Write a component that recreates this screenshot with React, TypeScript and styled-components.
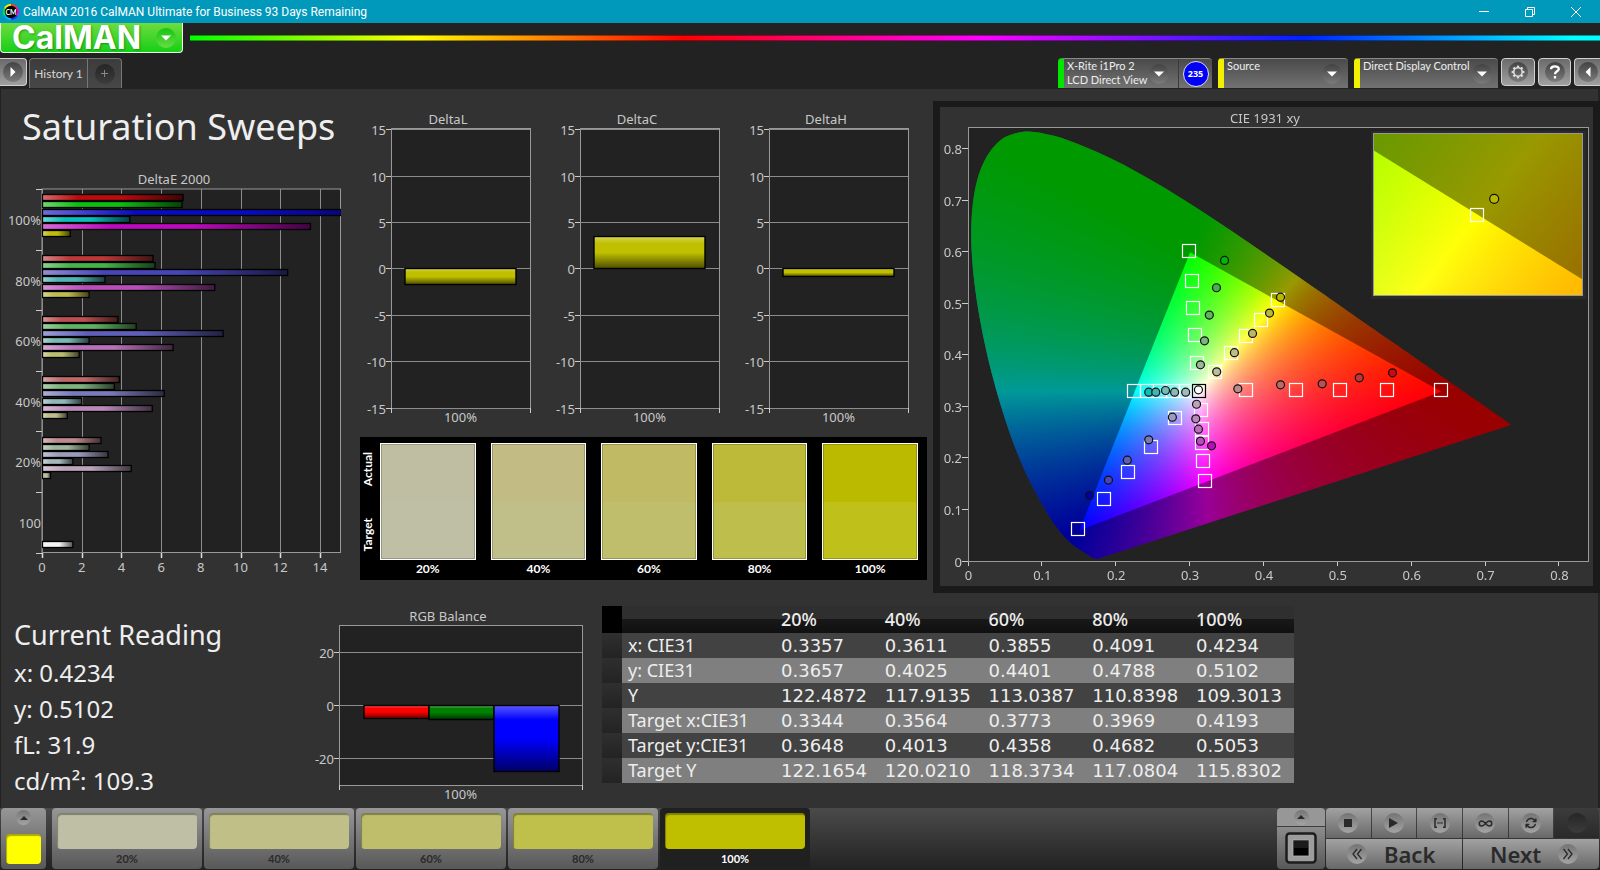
import React, { useLayoutEffect, useRef } from "react";
import styled, { createGlobalStyle, css } from "styled-components";
import { Infinity as InfinityIcon } from "lucide-react";
import { FaArrowsRotate } from "react-icons/fa6";

const wideFont = '"Noto Sans", "Open Sans", sans-serif';
const uiFont = 'Lato, "Noto Sans", sans-serif';

const GlobalStyle = createGlobalStyle`
  *, *::before, *::after { box-sizing: border-box; }
  body { margin: 0; background: #222; color: #eee; font-family: ${wideFont}; overflow-x: hidden; }
  button { font: inherit; color: inherit; border: 0; padding: 0; background: none; cursor: pointer; }
  h1, h2, p { margin: 0; font-weight: 400; }
`;

/* ---------- shell ---------- */

const Window = styled.div`
  display: flex;
  flex-direction: column;
  min-height: 100vh;
`;

const TitleBar = styled.div`
  display: flex;
  align-items: center;
  height: 23px;
  padding: 0 12px 0 3px;
  background: #0099bc;
  color: #fff;
  font-family: Roboto, "Noto Sans", sans-serif;
  font-size: 12px;
`;

const TitleText = styled.span`
  flex: 1;
  margin-left: 4px;
`;

const WindowButtons = styled.div`
  display: flex;
  gap: 22px;
`;

const WindowButton = styled.button`
  display: grid;
  place-items: center;
  width: 24px;
  height: 20px;
`;

const Header = styled.header`
  display: flex;
  flex-direction: column;
  background: #222;
`;

const BrandRow = styled.div`
  display: flex;
  align-items: flex-start;
  gap: 7px;
  height: 35px;
`;

const Brand = styled.button`
  display: flex;
  align-items: center;
  justify-content: space-between;
  width: 183px;
  height: 30px;
  padding: 0 6px 0 11px;
  border: 1px solid #e8ffe4;
  border-top: 0;
  border-radius: 0 0 4px 4px;
  background: linear-gradient(#6fdc3f, #17cf17);
  color: #fff;
  font-family: Inter, Lato, sans-serif;
  font-size: 32px;
  line-height: 28px;
  font-weight: 700;
  text-shadow: 1px 1px 2px #14661499;
`;

const Spectrum = styled.div`
  flex: 1;
  height: 6px;
  margin-top: 12px;
  border: solid #0006;
  border-width: 1px 0;
  background: linear-gradient(90deg, #0f0 0%, #ff0 16%, #f00 35%, #f0f 56%, #02f 79%, #0ff 98%);
`;

const NavRow = styled.div`
  display: flex;
  height: 31px;
`;

const Cluster = styled.div<{ $gap: number; $end?: boolean }>`
  display: flex;
  gap: ${(p) => p.$gap}px;
  margin-left: ${(p) => (p.$end ? "auto" : 0)};
`;

const SquareButton = styled.button<{ $width: number; $edge?: "left" | "right" }>`
  display: grid;
  place-items: center;
  width: ${(p) => p.$width}px;
  height: 28px;
  border: 1px solid #d0d0d0;
  border-radius: 4px;
  background: linear-gradient(#6a6a6a, #a0a0a0);
  ${(p) => p.$edge === "left" && css`border-left: 0; border-radius: 0 4px 4px 0;`}
  ${(p) => p.$edge === "right" && css`border-right: 0; border-radius: 4px 0 0 4px;`}
`;

const Disc = styled.span<{ $size?: number; $tone?: "dark" | "light" | "green" | "off" }>`
  display: grid;
  place-items: center;
  flex: none;
  width: ${(p) => p.$size ?? 20}px;
  height: ${(p) => p.$size ?? 20}px;
  border-radius: 50%;
  background: ${(p) =>
    ({
      dark: "linear-gradient(#434343, #7b7b7b)",
      light: "linear-gradient(#747474, #a4a4a4)",
      green: "linear-gradient(#14c414, #68dc44)",
      off: "linear-gradient(#262626, #3c3c3c)",
    })[p.$tone ?? "dark"]};
`;

const Tabs = styled.div`
  display: flex;
  height: 30px;
  border: 1px solid #777;
  border-bottom: 0;
  border-radius: 4px 4px 0 0;
  background: linear-gradient(#3c3c3c, #474747);
  color: #d8d8d8;
  font-family: ${uiFont};
  font-size: 12px;
`;

const Tab = styled.button<{ $width: number }>`
  display: grid;
  place-items: center;
  width: ${(p) => p.$width}px;
  & + & { border-left: 1px solid #777; }
`;

const Device = styled.div<{ $color: string; $width: number }>`
  display: flex;
  width: ${(p) => p.$width}px;
  height: 30px;
  border-top: 1px solid #8a8a8a;
  border-left: 6px solid ${(p) => p.$color};
  border-radius: 4px 4px 0 0;
  background: linear-gradient(#4a4a4a, #727272);
`;

const DeviceMenu = styled.button<{ $split?: boolean }>`
  display: flex;
  flex: 1;
  justify-content: space-between;
  align-items: flex-start;
  padding: 0 ${(p) => (p.$split ? 9 : 6)}px 0 3px;
  color: #eee;
  font-family: ${uiFont};
  font-size: 11px;
  line-height: 14px;
  text-align: left;
  white-space: nowrap;
  ${Disc} { align-self: center; }
`;

const LevelCell = styled.div`
  display: grid;
  place-items: center;
  width: 34px;
  border-left: 1px solid #3a3a3a;
`;

const Level = styled.button`
  width: 26px;
  height: 26px;
  border: 1px solid #dde;
  border-radius: 50%;
  background: #0000fa;
  color: #fff;
  font-size: 9px;
  font-weight: 700;
`;

/* ---------- workspace ---------- */

const Main = styled.main`
  flex: 1;
  padding-top: 12px;
  background: #323232;
  box-shadow: inset 1px 0 #222, inset -2px 0 #222;
`;

const UpperGrid = styled.div`
  display: grid;
  grid-template-columns: minmax(0, 350fr) minmax(0, 583fr) minmax(0, 667fr);
`;

const LowerGrid = styled.div`
  display: grid;
  grid-template-columns: minmax(0, 310fr) minmax(0, 292fr) minmax(0, 692fr) minmax(0, 306fr);
`;

const PageTitle = styled.h1`
  height: 68px;
  padding: 4px 0 0 22px;
  font-size: 36px;
  line-height: 44px;
  white-space: nowrap;
`;

const Chart = styled.svg`
  display: block;
  width: 100%;
  height: auto;
  font-family: ${wideFont};
  font-size: 13px;
  fill: #c8c8c8;
`;

const Middle = styled.div`
  padding: 0 6px 0 10px;
`;

const DeltaRow = styled.div`
  display: grid;
  grid-template-columns: repeat(3, minmax(0, 1fr));
`;

const SwatchPanel = styled.section`
  display: flex;
  height: 143px;
  padding: 6px 9px 0 0;
  background: #000;
  color: #fff;
  font-family: ${uiFont};
  font-size: 12px;
  font-weight: 700;
`;

const SideColumn = styled.div`
  display: flex;
  flex-direction: column;
  justify-content: space-between;
  align-items: center;
  width: 20px;
  height: 117px;
  padding: 9px 4px 9px 0;
  line-height: 16px;
  span { writing-mode: vertical-rl; transform: rotate(180deg); }
`;

const SwatchGrid = styled.div`
  display: grid;
  flex: 1;
  grid-template-columns: repeat(5, minmax(0, 1fr));
  column-gap: 15px;
`;

const SwatchItem = styled.div`
  text-align: center;
  line-height: 18px;
`;

const SwatchPair = styled.div<{ $actual: string; $target: string }>`
  height: 117px;
  border: 1px solid #fff;
  box-shadow: inset 0 0 0 1px #0003;
  background: linear-gradient(${(p) => p.$actual} 50%, ${(p) => p.$target} 50%);
`;

const CiePanel = styled.section`
  display: grid;
  border: 7px solid #1a1a1a;
  border-top-width: 6px;
  background: #323232;
  > * { grid-area: 1 / 1; }
`;

const Canvas = styled.canvas`
  display: block;
  width: 100%;
  height: auto;
`;

const Readings = styled.section`
  padding: 22px 0 0 14px;
  white-space: nowrap;
  font-size: 24px;
  line-height: 36px;
`;

const ReadingTitle = styled.h2`
  font-size: 27px;
  line-height: 40px;
`;

const TableCell = styled.div`
  padding-top: 13px;
`;

const DataTable = styled.table`
  width: 100%;
  border-collapse: collapse;
  table-layout: fixed;
  font-family: "DejaVu Sans", "Noto Sans", sans-serif;
  font-size: 18px;
  text-align: left;
  white-space: nowrap;
  th, td { height: 25px; padding: 0; font-weight: 400; line-height: 25px; }
  thead tr { background: linear-gradient(#2f2f2f 48%, #181818 50%, #101010); }
  thead th { height: 27px; font-family: ${wideFont}; font-weight: 500; }
  thead th:first-child { background: #000; }
  tbody tr { background: #424242; }
  tbody tr:nth-child(even) { background: #7f7f7f; }
  tbody td:first-child { background: linear-gradient(#2f2f2f, #232323); }
  tbody th { padding-left: 6px; font-family: ${wideFont}; }
`;

/* ---------- bottom bar ---------- */

const Footer = styled.footer`
  display: flex;
  height: 62px;
  padding: 0 1px;
  background: linear-gradient(#4a4a4a, #222);
`;

const CurrentPattern = styled.button`
  display: flex;
  flex-direction: column;
  align-items: center;
  justify-content: space-between;
  width: 45px;
  height: 61px;
  margin-right: 6px;
  padding: 2px 0 5px;
  border-radius: 4px;
  background: linear-gradient(#979797, #585858);
`;

const PatternColor = styled.span<{ $color: string; $width: string; $height: number }>`
  flex: none;
  width: ${(p) => p.$width};
  height: ${(p) => p.$height}px;
  border-radius: 4px;
  background: ${(p) => p.$color};
  box-shadow: inset 1px 2px 1px #0005;
`;

const PatternButton = styled.button<{ $active?: boolean }>`
  display: flex;
  flex-direction: column;
  justify-content: flex-start;
  width: 150px;
  height: 61px;
  padding: 5px 5px 0;
  border-radius: 4px;
  background: ${(p) => (p.$active ? "#202020" : "linear-gradient(#979797, #585858)")};
  color: ${(p) => (p.$active ? "#fff" : "#2a2a2a")};
  font-family: ${uiFont};
  font-size: 11px;
  line-height: 20px;
  font-weight: 700;
  text-align: center;
`;

const WindowSize = styled.div`
  display: flex;
  flex-direction: column;
  gap: 1px;
  width: 48px;
  height: 61px;
`;

const Key = styled.button<{ $off?: boolean }>`
  display: grid;
  place-items: center;
  color: #2a2a2a;
  background: ${(p) => (p.$off ? "linear-gradient(#3c3c3c, #2a2a2a)" : "linear-gradient(#a2a2a2, #686868)")};
`;

const SizeUp = styled(Key)`
  height: 18px;
  border-radius: 4px 4px 0 0;
  background: #979797;
`;

const SizeKey = styled(Key)`
  flex: 1;
  border-radius: 0 0 4px 4px;
  background: linear-gradient(#8c8c8c, #585858);
`;

const Transport = styled.div`
  display: flex;
  flex-direction: column;
  gap: 1px;
  width: 273px;
  height: 61px;
  border-radius: 4px;
  overflow: hidden;
`;

const KeyRow = styled.div<{ $count: number }>`
  display: grid;
  grid-template-columns: repeat(${(p) => p.$count}, minmax(0, 1fr));
  gap: 1px;
  height: 30px;
`;

const StepKey = styled(Key)<{ $forward?: boolean }>`
  display: flex;
  align-items: center;
  gap: 17px;
  padding-left: ${(p) => (p.$forward ? 27 : 21)}px;
  font-size: 22px;
  line-height: 28px;
  font-weight: 600;
`;

/* ---------- small icons ---------- */

const Caret = ({ dir, color = "#fff", size = 10 }: { dir: "down" | "up" | "right" | "left"; color?: string; size?: number }) => {
  const turn = { down: 0, up: 180, right: -90, left: 90 }[dir];
  return (
    <svg width={size} height={size} viewBox="0 0 10 10" aria-hidden="true">
      <path d="M0 2.5h10L5 7.5z" fill={color} transform={`rotate(${turn} 5 5)`} />
    </svg>
  );
};

const GearIcon = () => (
  <svg width="14" height="14" viewBox="0 0 14 14" fill="none" stroke="#ddd" aria-hidden="true">
    <circle cx="7" cy="7" r="4.2" strokeWidth="1.6" />
    {[0, 45, 90, 135, 180, 225, 270, 315].map((a) => (
      <path key={a} d="M7 0.6v2" strokeWidth="2.2" transform={`rotate(${a} 7 7)`} />
    ))}
  </svg>
);

const AppIcon = () => (
  <svg width="16" height="16" viewBox="0 0 16 16" aria-hidden="true">
    {["#f33", "#f0f", "#33f", "#0bf", "#0e3", "#fe0"].map((c, i) => (
      <path key={c} d="M8 8V0A8 8 0 0 1 14.93 4z" fill={c} transform={`rotate(${i * 60} 8 8)`} />
    ))}
    <circle cx="8" cy="8" r="6.2" fill="#000" />
    <text x="8" y="10.6" fill="#fff" fontSize="7" fontWeight="700" textAnchor="middle" fontFamily="Lato, sans-serif">CM</text>
  </svg>
);

const SizeIcon = () => (
  <svg width="32" height="32" viewBox="0 0 32 32" aria-hidden="true">
    <rect x="1.5" y="1.5" width="29" height="29" rx="3" fill="#9c9c9c" stroke="#1c1c1c" strokeWidth="2.5" />
    <rect x="8" y="8" width="16" height="16" fill="#1b1b1b" stroke="#bbb" strokeWidth="0.6" />
    <rect x="9" y="16" width="14" height="7" fill="#000" />
  </svg>
);

const Chevrons = ({ right }: { right?: boolean }) => (
  <svg width="12" height="12" viewBox="0 0 12 12" fill="none" stroke="#2a2a2a" strokeWidth="1.3" aria-hidden="true">
    <path d={right ? "M1.5 1l4 5-4 5M6 1l4 5-4 5" : "M6 1L2 6l4 5M10.5 1l-4 5 4 5"} />
  </svg>
);

/* ---------- charts ---------- */

interface Column {
  from: number;
  to: number;
  value: number;
  color: string;
}

interface ColumnChartProps {
  id: string;
  title: string;
  titleX: number;
  width: number;
  height: number;
  plot: { left: number; right: number; top: number; bottom: number };
  ticks: number[];
  min: number;
  max: number;
  columns: Column[];
}

const ColumnChart = ({ id, title, titleX, width, height, plot, ticks, min, max, columns }: ColumnChartProps) => {
  const y = (v: number) => Math.floor(plot.bottom - ((v - min) / (max - min)) * (plot.bottom - plot.top)) + 0.5;
  const { left, right, top, bottom } = plot;
  return (
    <Chart viewBox={`0 0 ${width} ${height}`} role="img" aria-label={title}>
      <text x={titleX} y={top - 4} textAnchor="middle">{title}</text>
      <rect x={left + 0.5} y={top + 0.5} width={right - left} height={bottom - top} fill="#222" stroke="#999" />
      {ticks.map((t) => (
        <g key={t}>
          <path d={`M${left - 5} ${y(t)}H${right}`} stroke="#8c8c8c" />
          <path d={`M${left - 5} ${y(t)}h5`} stroke="#ccc" />
          <text x={left - 5} y={y(t) + 5} textAnchor="end">{t}</text>
        </g>
      ))}
      {columns.map((c, i) => {
        const y0 = Math.min(y(c.value), y(0));
        return (
          <g key={i}>
            <linearGradient id={`${id}${i}`} x2="0" y2="1">
              <stop offset="0" stopColor="#fff" stopOpacity="0.35" />
              <stop offset="0.22" stopColor="#fff" stopOpacity="0" />
              <stop offset="0.5" stopColor="#000" stopOpacity="0" />
              <stop offset="1" stopColor="#000" stopOpacity="0.6" />
            </linearGradient>
            <rect x={c.from} y={y0} width={c.to - c.from} height={Math.abs(y(c.value) - y(0))} fill={c.color} />
            <rect x={c.from} y={y0} width={c.to - c.from} height={Math.abs(y(c.value) - y(0))} fill={`url(#${id}${i})`} stroke="#000" strokeWidth="1.4" />
          </g>
        );
      })}
      <path d={`M${left + 0.5} ${bottom}v5M${right + 0.5} ${bottom}v5`} stroke="#ccc" />
      <text x={(left + right) / 2} y={bottom + 14} textAnchor="middle">100%</text>
    </Chart>
  );
};

const sweeps = [
  { label: "100%", values: [7.08, 7.03, 15.2, 4.4, 13.5, 1.4], colors: ["#be0a0a", "#0fbe12", "#0a0abe", "#0abebe", "#be0abe", "#bebe0a"] },
  { label: "80%", values: [5.57, 5.67, 12.35, 3.15, 8.68, 2.35], colors: ["#bc3838", "#42b448", "#4646b9", "#50b4b4", "#b94eb9", "#bcbc50"] },
  { label: "60%", values: [3.8, 4.72, 9.1, 2.35, 6.58, 1.85], colors: ["#bc5050", "#5fb462", "#5f5fb9", "#76b9b6", "#b970b9", "#bcbc70"] },
  { label: "40%", values: [3.87, 3.62, 6.13, 1.98, 5.53, 1.25], colors: ["#bc6969", "#7db47d", "#7a7ab9", "#91b6b9", "#b98ab9", "#bcbc8c"] },
  { label: "20%", values: [2.95, 2.35, 3.3, 1.53, 4.47, 0.4], colors: ["#bc8a8a", "#9bb69b", "#9b9bbc", "#a5b9bc", "#bca3bc", "#bcbca0"] },
  { label: "100", values: [1.53], colors: ["#f4f4f4"] },
];

const DeltaEChart = () => {
  const x = (v: number) => 42 + v * 19.85;
  const groupTop = (i: number) => 20 + i * 60.6;
  return (
    <Chart viewBox="0 0 350 420" role="img" aria-label="DeltaE 2000">
      <defs>
        <linearGradient id="gloss">
          <stop offset="0" stopColor="#fff" stopOpacity="0.4" />
          <stop offset="0.25" stopColor="#fff" stopOpacity="0" />
          <stop offset="0.55" stopColor="#000" stopOpacity="0" />
          <stop offset="1" stopColor="#000" stopOpacity="0.65" />
        </linearGradient>
        <clipPath id="deClip"><rect x="42" y="20" width="299" height="364" /></clipPath>
      </defs>
      <text x="174" y="15" textAnchor="middle">DeltaE 2000</text>
      <rect x="42" y="20" width="298.5" height="363.5" fill="#222" stroke="#999" />
      {[0, 2, 4, 6, 8, 10, 12, 14].map((t) => (
        <g key={t}>
          <path d={`M${Math.round(x(t)) + 0.5} 20V388`} stroke="#8c8c8c" />
          <path d={`M${Math.round(x(t)) + 0.5} 384v5`} stroke="#ddd" strokeWidth="1.5" />
          <text x={x(t)} y="403" textAnchor="middle">{t}</text>
        </g>
      ))}
      {[0, 1, 2, 3, 4, 5, 6].map((i) => (
        <path key={i} d={`M36 ${Math.round(groupTop(i)) + 0.5}h6`} stroke="#ccc" />
      ))}
      {sweeps.map((s, i) => (
        <g key={s.label}>
          <text x="41" y={groupTop(i) + 36} textAnchor="end">{s.label}</text>
          <g clipPath="url(#deClip)">
            {s.values.map((v, j) => {
              const top = s.values.length === 1 ? 372 : Math.round(groupTop(i) + 5.3 + j * 7.15);
              const length = v * 19.85 * (v > 15 ? 1.25 : 1);
              return (
                <g key={j}>
                  <rect x="42.5" y={top + 0.5} width={length} height="6" fill={s.colors[j]} />
                  <rect x="42.5" y={top + 0.5} width={length} height="6" fill="url(#gloss)" stroke="#000" strokeWidth="1.3" />
                </g>
              );
            })}
          </g>
        </g>
      ))}
    </Chart>
  );
};

type Point = [number, number];

const locus: Point[] = [
  [0.1741, 0.005], [0.1714, 0.0051], [0.1689, 0.0069], [0.1644, 0.0109], [0.1566, 0.0177], [0.144, 0.0297],
  [0.1355, 0.0399], [0.1241, 0.0578], [0.1096, 0.0868], [0.0913, 0.1327], [0.0687, 0.2007], [0.0454, 0.295],
  [0.0235, 0.4127], [0.0082, 0.5384], [0.0039, 0.6548], [0.0139, 0.7502], [0.0389, 0.812], [0.0743, 0.8338],
  [0.1142, 0.8262], [0.1547, 0.8059], [0.1929, 0.7816], [0.2296, 0.7543], [0.2658, 0.7243], [0.3016, 0.6923],
  [0.3373, 0.6589], [0.3731, 0.6245], [0.4087, 0.5896], [0.4441, 0.5547], [0.4788, 0.5202], [0.5125, 0.4866],
  [0.5752, 0.4242], [0.627, 0.3725], [0.6915, 0.3083], [0.719, 0.2809], [0.7347, 0.2653],
];
const gamut: Point[] = [[0.64, 0.33], [0.3, 0.6], [0.15, 0.06]];

const targets: Point[] = [
  [0.299, 0.603], [0.302, 0.544], [0.304, 0.491], [0.307, 0.44], [0.31, 0.386],
  [0.4193, 0.5076], [0.396, 0.469], [0.376, 0.438], [0.356, 0.405], [0.334, 0.368],
  [0.224, 0.33], [0.242, 0.33], [0.259, 0.33], [0.277, 0.33], [0.295, 0.33],
  [0.315, 0.294], [0.316, 0.257], [0.316, 0.229], [0.318, 0.194], [0.3195, 0.156],
  [0.279, 0.278], [0.247, 0.223], [0.216, 0.173], [0.184, 0.1215], [0.1485, 0.063],
  [0.376, 0.333], [0.4436, 0.333], [0.503, 0.333], [0.567, 0.333], [0.64, 0.333],
];

const actuals: [number, number, string][] = [
  [0.3466, 0.584, "#00b800"], [0.3357, 0.531, "#42b448"], [0.326, 0.478, "#5fb462"], [0.3195, 0.428, "#7db47d"], [0.314, 0.3815, "#9bb69b"],
  [0.4224, 0.5128, "#b8b800"], [0.4075, 0.482, "#b8b840"], [0.3845, 0.4425, "#b8b866"], [0.36, 0.405, "#bcbc8c"], [0.336, 0.368, "#bcbca0"],
  [0.244, 0.3285, "#0abebe"], [0.2535, 0.3285, "#42b4b4"], [0.2667, 0.3317, "#76b9b6"], [0.279, 0.3285, "#91b6b9"], [0.294, 0.3285, "#a5b9bc"],
  [0.3087, 0.305, "#bca3bc"], [0.3077, 0.2768, "#b98ab9"], [0.3113, 0.2567, "#b970b9"], [0.314, 0.2334, "#b94eb9"], [0.329, 0.2244, "#be0abe"],
  [0.276, 0.28, "#9b9bbc"], [0.244, 0.236, "#7a7ab9"], [0.215, 0.1966, "#5f5fb9"], [0.1895, 0.158, "#4646b9"], [0.1638, 0.128, "#0000a0"],
  [0.3646, 0.335, "#bc8a8a"], [0.4224, 0.3427, "#bc6969"], [0.4788, 0.3447, "#bc5050"], [0.529, 0.3563, "#bc3838"], [0.574, 0.366, "#c80a0a"],
  [0.3113, 0.333, "#ffffff"],
];

const cie = { width: 653, height: 479, left: 28, right: 648, top: 20, bottom: 454 };
const cieX = (x: number) => cie.left + 0.5 + x * 738.7;
const cieY = (y: number) => cie.bottom + 0.5 - y * 515.5;

const inset = { left: 433, top: 26, width: 210, height: 163, x0: 0.394, x1: 0.4446, y0: 0.4801, y1: 0.5306 };
const insetX = (x: number) => inset.left + ((x - inset.x0) / (inset.x1 - inset.x0)) * inset.width;
const insetY = (y: number) => inset.top + ((inset.y1 - y) / (inset.y1 - inset.y0)) * inset.height;

/** Brightest displayable colour for a chromaticity, negatives clipped. */
const chromaticityColor = (x: number, y: number) => {
  const X = x / y;
  const Z = (1 - x - y) / y;
  const rgb = [
    3.2406 * X - 1.5372 - 0.4986 * Z,
    -0.9689 * X + 1.8758 + 0.0415 * Z,
    0.0557 * X - 0.204 + 1.057 * Z,
  ].map((c) => Math.max(0, c));
  const peak = Math.max(...rgb);
  return rgb.map((c) => (255 * c) / peak);
};

const colorField = (width: number, height: number, toXY: (px: number, py: number) => Point) => {
  const layer = document.createElement("canvas");
  layer.width = width;
  layer.height = height;
  const ctx = layer.getContext("2d")!;
  const image = ctx.createImageData(width, height);
  for (let py = 0; py < height; py++) {
    for (let px = 0; px < width; px++) {
      const [x, y] = toXY(px + 0.5, py + 0.5);
      const [r, g, b] = chromaticityColor(x, Math.max(y, 0.001));
      image.data.set([r, g, b, 255], (py * width + px) * 4);
    }
  }
  ctx.putImageData(image, 0, 0);
  return layer;
};

const tracePolygon = (ctx: CanvasRenderingContext2D, points: Point[]) => {
  ctx.beginPath();
  points.forEach((p) => ctx.lineTo(...p));
  ctx.closePath();
};

/** Catmull-Rom curve through every point, closed by a straight line. */
const traceCurve = (ctx: CanvasRenderingContext2D, points: Point[]) => {
  ctx.beginPath();
  ctx.moveTo(...points[0]);
  for (let i = 0; i < points.length - 1; i++) {
    const a = points[Math.max(i - 1, 0)];
    const b = points[i];
    const c = points[i + 1];
    const d = points[Math.min(i + 2, points.length - 1)];
    ctx.bezierCurveTo(
      b[0] + (c[0] - a[0]) / 6, b[1] + (c[1] - a[1]) / 6,
      c[0] - (d[0] - b[0]) / 6, c[1] - (d[1] - b[1]) / 6,
      c[0], c[1],
    );
  }
  ctx.closePath();
};

const paintDiagram = (ctx: CanvasRenderingContext2D) => {
  const plotW = cie.right - cie.left;
  const plotH = cie.bottom - cie.top;
  ctx.clearRect(0, 0, cie.width, cie.height);
  ctx.fillStyle = "#222";
  ctx.fillRect(cie.left, cie.top, plotW, plotH);

  const field = colorField(plotW, plotH, (px, py) => [px / 738.7, (plotH - py) / 515.5]);
  const toPlot = (p: Point): Point => [cieX(p[0]), cieY(p[1])];
  ctx.save();
  traceCurve(ctx, locus.map(toPlot));
  ctx.clip();
  ctx.drawImage(field, cie.left, cie.top);
  ctx.fillStyle = "rgba(0,0,0,0.4)";
  ctx.fillRect(cie.left, cie.top, plotW, plotH);
  ctx.restore();
  ctx.save();
  tracePolygon(ctx, gamut.map(toPlot));
  ctx.clip();
  ctx.drawImage(field, cie.left, cie.top);
  ctx.restore();

  const { left, top, width, height } = inset;
  ctx.fillStyle = "#2b2b2b";
  ctx.fillRect(left - 2, top - 2, width + 5, height + 5);
  const close = colorField(width, height, (px, py) => [
    inset.x0 + (px / width) * (inset.x1 - inset.x0),
    inset.y1 - (py / height) * (inset.y1 - inset.y0),
  ]);
  ctx.drawImage(close, left, top);
  ctx.fillStyle = "rgba(0,0,0,0.4)";
  ctx.fillRect(left, top, width, height);
  ctx.save();
  ctx.beginPath();
  ctx.rect(left, top, width, height);
  ctx.clip();
  tracePolygon(ctx, gamut.map((p): Point => [insetX(p[0]), insetY(p[1])]));
  ctx.clip();
  ctx.drawImage(close, left, top);
  ctx.restore();
};

const CieChart = () => {
  const ref = useRef<HTMLCanvasElement>(null);
  useLayoutEffect(() => {
    const ctx = ref.current?.getContext("2d");
    if (ctx) paintDiagram(ctx);
  }, []);
  return (
    <CiePanel>
      <Canvas ref={ref} width={cie.width} height={cie.height} />
      <Chart viewBox={`0 0 ${cie.width} ${cie.height}`} role="img" aria-label="CIE 1931 xy">
        <text x="325" y="16" textAnchor="middle">CIE 1931 xy</text>
        <rect x={cie.left + 0.5} y={cie.top + 0.5} width={cie.right - cie.left} height={cie.bottom - cie.top} fill="none" stroke="#999" />
        {[0, 0.1, 0.2, 0.3, 0.4, 0.5, 0.6, 0.7, 0.8].map((t) => (
          <g key={t}>
            <path d={`M${Math.round(cieX(t)) - 0.5} 455v4M22 ${Math.round(cieY(t)) - 0.5}h6`} stroke="#ccc" />
            <text x={cieX(t)} y="473" textAnchor="middle">{t}</text>
            <text x="22" y={cieY(t) + 5} textAnchor="end">{t}</text>
          </g>
        ))}
        <g fill="none" stroke="#fff" strokeWidth="1.2">
          {targets.map(([x, y], i) => (
            <rect key={i} x={Math.round(cieX(x)) - 6.5} y={Math.round(cieY(y)) - 6.5} width="13" height="13" />
          ))}
          <rect x={Math.round(cieX(0.3127)) - 6.5} y={Math.round(cieY(0.331)) - 6.5} width="13" height="13" stroke="#000" />
        </g>
        <g stroke="#111" strokeWidth="1.2">
          {actuals.map(([x, y, color], i) => (
            <circle key={i} cx={cieX(x)} cy={cieY(y)} r="4" fill={color} />
          ))}
        </g>
        <rect x={inset.left + 0.5} y={inset.top + 0.5} width={inset.width - 1} height={inset.height - 1} fill="none" stroke="#999" />
        <rect x={Math.round(insetX(0.4193)) - 7.5} y={Math.round(insetY(0.5053)) - 6.5} width="13" height="13" fill="none" stroke="#fff" strokeWidth="1.2" />
        <circle cx={insetX(0.4232)} cy={insetY(0.5102)} r="4.5" fill="#b8b800" stroke="#111" strokeWidth="1.2" />
      </Chart>
    </CiePanel>
  );
};

/* ---------- data ---------- */

const deltas = [
  { title: "DeltaL", value: -1.7 },
  { title: "DeltaC", value: 3.55 },
  { title: "DeltaH", value: -0.8 },
];

const swatches = [
  { label: "20%", actual: "#c0bea2", target: "#bfbfa6" },
  { label: "40%", actual: "#c2bc84", target: "#c0bf8a" },
  { label: "60%", actual: "#c0ba64", target: "#bfbe6c" },
  { label: "80%", actual: "#bdba3a", target: "#bebe4c" },
  { label: "100%", actual: "#bcba00", target: "#c0c01a" },
];

const patterns = [
  { label: "20%", color: "#bfbfa6" },
  { label: "40%", color: "#bfbf87" },
  { label: "60%", color: "#bfbf6b" },
  { label: "80%", color: "#bfbf4b" },
  { label: "100%", color: "#bfbf00" },
];

const rows: [string, string[]][] = [
  ["x: CIE31", ["0.3357", "0.3611", "0.3855", "0.4091", "0.4234"]],
  ["y: CIE31", ["0.3657", "0.4025", "0.4401", "0.4788", "0.5102"]],
  ["Y", ["122.4872", "117.9135", "113.0387", "110.8398", "109.3013"]],
  ["Target x:CIE31", ["0.3344", "0.3564", "0.3773", "0.3969", "0.4193"]],
  ["Target y:CIE31", ["0.3648", "0.4013", "0.4358", "0.4682", "0.5053"]],
  ["Target Y", ["122.1654", "120.0210", "118.3734", "117.0804", "115.8302"]],
];

export default function App() {
  return (
    <Window>
      <GlobalStyle />
      <TitleBar>
        <AppIcon />
        <TitleText>CalMAN 2016 CalMAN Ultimate for Business 93 Days Remaining</TitleText>
        <WindowButtons>
          <WindowButton aria-label="Minimize">
            <svg width="10" height="10" stroke="#fff"><path d="M0 4.5h10" /></svg>
          </WindowButton>
          <WindowButton aria-label="Restore">
            <svg width="10" height="10" fill="none" stroke="#fff"><path d="M.5 2.5h7v7h-7zM2.5 2.5v-2h7v7h-2" /></svg>
          </WindowButton>
          <WindowButton aria-label="Close">
            <svg width="10" height="10" stroke="#fff"><path d="M0 0l10 10M10 0L0 10" /></svg>
          </WindowButton>
        </WindowButtons>
      </TitleBar>

      <Header>
        <BrandRow>
          <Brand aria-haspopup="menu">
            CalMAN
            <Disc $tone="green"><Caret dir="down" /></Disc>
          </Brand>
          <Spectrum />
        </BrandRow>
        <NavRow>
          <Cluster $gap={2}>
            <SquareButton $width={27} $edge="left" aria-label="Open navigation">
              <Disc><Caret dir="right" /></Disc>
            </SquareButton>
            <Tabs>
              <Tab $width={57}>History 1</Tab>
              <Tab $width={34} aria-label="Add history">
                <Disc $tone="off">
                  <svg width="7" height="7" stroke="#8a8a8a"><path d="M0 3.5h7M3.5 0v7" /></svg>
                </Disc>
              </Tab>
            </Tabs>
          </Cluster>
          <Cluster $gap={3} $end>
            <Cluster $gap={6}>
              <Device $color="#00e600" $width={154}>
                <DeviceMenu $split aria-haspopup="menu">
                  <span>X-Rite i1Pro 2<br />LCD Direct View</span>
                  <Disc><Caret dir="down" /></Disc>
                </DeviceMenu>
                <LevelCell><Level>235</Level></LevelCell>
              </Device>
              <Device $color="#f0f000" $width={130}>
                <DeviceMenu aria-haspopup="menu">Source<Disc><Caret dir="down" /></Disc></DeviceMenu>
              </Device>
              <Device $color="#f0f000" $width={144}>
                <DeviceMenu aria-haspopup="menu">Direct Display Control<Disc><Caret dir="down" /></Disc></DeviceMenu>
              </Device>
            </Cluster>
            <SquareButton $width={34} aria-label="Settings"><Disc><GearIcon /></Disc></SquareButton>
            <SquareButton $width={33} aria-label="Help">
              <Disc>
                <svg width="12" height="14" viewBox="0 0 12 14" fill="none" stroke="#fff" strokeWidth="2.3" aria-hidden="true">
                  <path d="M2 4.2C2 .6 9.8.6 9.8 4 9.8 6.5 6 6.2 6 9.2M6 11v2.4" />
                </svg>
              </Disc>
            </SquareButton>
            <SquareButton $width={26} $edge="right" aria-label="Open side panel"><Disc><Caret dir="left" /></Disc></SquareButton>
          </Cluster>
        </NavRow>
      </Header>

      <Main>
        <UpperGrid>
          <section>
            <PageTitle>Saturation Sweeps</PageTitle>
            <DeltaEChart />
          </section>
          <Middle>
            <DeltaRow>
              {deltas.map((d) => (
                <ColumnChart
                  key={d.title}
                  id={d.title}
                  title={d.title}
                  titleX={88}
                  width={189}
                  height={336}
                  plot={{ left: 31, right: 170, top: 27, bottom: 307 }}
                  ticks={[15, 10, 5, 0, -5, -10, -15]}
                  min={-15}
                  max={15.2}
                  columns={[{ from: 45, to: 156, value: d.value, color: "#c0c000" }]}
                />
              ))}
            </DeltaRow>
            <SwatchPanel>
              <SideColumn><span>Actual</span><span>Target</span></SideColumn>
              <SwatchGrid>
                {swatches.map((s) => (
                  <SwatchItem key={s.label}>
                    <SwatchPair $actual={s.actual} $target={s.target} />
                    {s.label}
                  </SwatchItem>
                ))}
              </SwatchGrid>
            </SwatchPanel>
          </Middle>
          <CieChart />
        </UpperGrid>

        <LowerGrid>
          <Readings>
            <ReadingTitle>Current Reading</ReadingTitle>
            <p>x: 0.4234</p>
            <p>y: 0.5102</p>
            <p>fL: 31.9</p>
            <p>cd/m²: 109.3</p>
          </Readings>
          <ColumnChart
            id="rgb"
            title="RGB Balance"
            titleX={138}
            width={292}
            height={215}
            plot={{ left: 29, right: 272, top: 32, bottom: 192 }}
            ticks={[20, 0, -20]}
            min={-30}
            max={30.5}
            columns={[
              { from: 54, to: 119, value: -4.8, color: "#ff0000" },
              { from: 119, to: 184, value: -5.4, color: "#008000" },
              { from: 184, to: 249, value: -25, color: "#0000ff" },
            ]}
          />
          <TableCell>
            <DataTable>
              <colgroup>
                <col width="20" /><col width="159" />
                <col /><col /><col /><col /><col width="98" />
              </colgroup>
              <thead>
                <tr><th /><th />{swatches.map((s) => <th key={s.label} scope="col">{s.label}</th>)}</tr>
              </thead>
              <tbody>
                {rows.map(([label, cells]) => (
                  <tr key={label}>
                    <td />
                    <th scope="row">{label}</th>
                    {cells.map((c) => <td key={c}>{c}</td>)}
                  </tr>
                ))}
              </tbody>
            </DataTable>
          </TableCell>
        </LowerGrid>
      </Main>

      <Footer>
        <CurrentPattern aria-label="Choose pattern">
          <Disc $size={15} $tone="light"><Caret dir="up" size={8} color="#2a2a2a" /></Disc>
          <PatternColor $color="#ffff00" $width="35px" $height={30} />
        </CurrentPattern>
        <Cluster $gap={2}>
          {patterns.map((p, i) => (
            <PatternButton key={p.label} $active={i === patterns.length - 1}>
              <PatternColor $color={p.color} $width="100%" $height={36} />
              {p.label}
            </PatternButton>
          ))}
        </Cluster>
        <Cluster $gap={1} $end>
          <WindowSize>
            <SizeUp aria-label="Pattern window options">
              <Disc $size={15} $tone="light"><Caret dir="up" size={8} color="#2a2a2a" /></Disc>
            </SizeUp>
            <SizeKey aria-label="Pattern window size"><SizeIcon /></SizeKey>
          </WindowSize>
          <Transport>
            <KeyRow $count={6}>
              <Key aria-label="Stop"><Disc $tone="light"><svg width="8" height="8"><path d="M0 0h8v8H0z" fill="#2a2a2a" /></svg></Disc></Key>
              <Key aria-label="Read"><Disc $tone="light"><svg width="9" height="10"><path d="M0 0l9 5-9 5z" fill="#2a2a2a" /></svg></Disc></Key>
              <Key aria-label="Read series">
                <Disc $tone="light">
                  <svg width="12" height="10" fill="none" stroke="#2a2a2a" strokeWidth="1.5">
                    <path d="M3 .8H1v8.4h2M9 .8h2v8.4H9M3.5 5h1.2M5.4 5h1.2M7.3 5h1.2" />
                  </svg>
                </Disc>
              </Key>
              <Key aria-label="Read continuously"><Disc $tone="light"><InfinityIcon size={15} strokeWidth={2.4} /></Disc></Key>
              <Key aria-label="Repeat"><Disc $tone="light"><FaArrowsRotate size={12} /></Disc></Key>
              <Key $off aria-label="Idle" disabled><Disc $tone="off" /></Key>
            </KeyRow>
            <KeyRow $count={2}>
              <StepKey>
                <Disc $tone="light"><Chevrons /></Disc>
                Back
              </StepKey>
              <StepKey $forward>
                Next
                <Disc $tone="light"><Chevrons right /></Disc>
              </StepKey>
            </KeyRow>
          </Transport>
        </Cluster>
      </Footer>
    </Window>
  );
}
